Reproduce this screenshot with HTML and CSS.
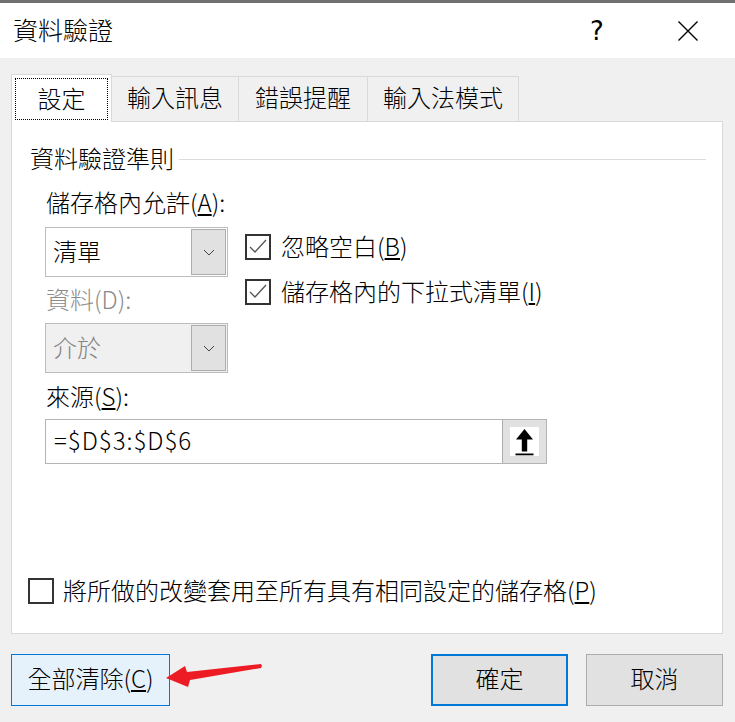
FILE: index.html
```html
<!DOCTYPE html>
<html lang="zh-Hant">

<head>
  <meta charset="UTF-8">
  <meta name="viewport" content="width=device-width, initial-scale=1.0">
  <title>資料驗證</title>
  <link rel="stylesheet" href="styles.css">
</head>

<body>
  <div id="topline"></div>
  <div id="titlebar">
    <span id="title">資料驗證</span>
    <span id="help">?</span>
    <svg id="close" width="22" height="22" viewBox="0 0 22 22">
      <path d="M1.5 1.5L20.5 20.5M20.5 1.5L1.5 20.5" stroke="#000" stroke-width="1.4" fill="none" />
    </svg>
  </div>

  <div id="content">
    <ul id="tabs">
      <li class="tab active"><span class="focus">設定</span></li>
      <li class="tab t1">輸入訊息</li>
      <li class="tab t2">錯誤提醒</li>
      <li class="tab t3">輸入法模式</li>
    </ul>

    <div id="panel">
      <div class="group">
        <span>資料驗證準則</span>
        <i class="rule"></i>
      </div>

      <div class="criteria">
        <div class="left">
          <p class="label">儲存格內允許(<u>A</u>):</p>
          <div class="combo">
            <span class="value">清單</span>
            <b class="drop">
              <svg width="12" height="7" viewBox="0 0 12 7"><path d="M1 1L6 6L11 1" stroke="#444" stroke-width="1" fill="none" /></svg>
            </b>
          </div>
          <p class="label off">資料(D):</p>
          <div class="combo off">
            <span class="value">介於</span>
            <b class="drop">
              <svg width="12" height="7" viewBox="0 0 12 7"><path d="M1 1L6 6L11 1" stroke="#444" stroke-width="1" fill="none" /></svg>
            </b>
          </div>
        </div>
        <div class="right">
          <div class="check">
            <span class="box"><svg width="22" height="22" viewBox="0 0 22 22"><path d="M3 11L8 16L19 4" stroke="#555" stroke-width="1.3" fill="none" /></svg></span>
            <span>忽略空白(<u>B</u>)</span>
          </div>
          <div class="check second">
            <span class="box"><svg width="22" height="22" viewBox="0 0 22 22"><path d="M3 11L8 16L19 4" stroke="#555" stroke-width="1.3" fill="none" /></svg></span>
            <span>儲存格內的下拉式清單(<u>I</u>)</span>
          </div>
        </div>
      </div>

      <p class="label source-label">來源(<u>S</u>):</p>
      <div class="source">
        <span class="value">=$D$3:$D$6</span>
        <b class="pick">
          <span class="pick-inner">
            <svg width="29" height="29" viewBox="0 0 29 29">
              <path d="M14.5 2L23 12.5H17.2V24.5H11.8V12.5H6Z" fill="#000" />
              <rect x="5.5" y="26.5" width="18" height="1.8" fill="#000" />
            </svg>
          </span>
        </b>
      </div>

      <div class="check apply">
        <span class="box"></span>
        <span>將所做的改變套用至所有具有相同設定的儲存格(<u>P</u>)</span>
      </div>
    </div>

    <div id="buttons">
      <button class="btn clear">全部清除(<u>C</u>)</button>
      <span class="grow"></span>
      <button class="btn ok">確定</button>
      <button class="btn cancel">取消</button>
    </div>
  </div>

  <!-- red pointer drawn over the dialog -->
  <svg id="pointer" width="110" height="40" viewBox="0 0 110 40">
    <path d="M6 23L25 11L27 17L101 9L102 11L101 13L30 25L28 32Z" fill="#ed1c24" />
  </svg>
</body>

</html>
```

FILE: styles.css
```css
* {
  margin: 0;
  padding: 0;
  box-sizing: border-box;
}

body {
  width: 735px;
  height: 722px;
  overflow: hidden;
  position: relative;
  background: #f0f0f0;
  color: #000;
  font-family: "Noto Sans CJK TC", sans-serif;
  font-size: 24px;
  font-weight: 300;
}

#topline {
  height: 3px;
  background: #707070;
}

#titlebar {
  height: 55px;
  background: #fff;
  display: flex;
  align-items: center;
  padding-left: 13px;
}

#title {
  flex: 1;
  font-size: 25px;
  line-height: 30px;
  margin-bottom: 3px;
}

#help {
  width: 30px;
  text-align: center;
  font-family: "DejaVu Sans", sans-serif;
  font-weight: normal;
  font-size: 26px;
  line-height: 30px;
}

#close {
  margin-left: 65px;
  margin-right: 36px;
}

#content {
  padding: 0 12px 0 11px;
}

#tabs {
  list-style: none;
  display: flex;
  align-items: flex-end;
  height: 64px;
  margin-bottom: -1px;
  position: relative;
  z-index: 1;
}

.tab {
  height: 46px;
  line-height: 40px;
  text-align: center;
  border: 1px solid #d9d9d9;
  border-left: none;
  background: #f0f0f0;
}

.tab.active {
  width: 101px;
  height: 48px;
  padding: 3px 3px 2px;
  border-left: 1px solid #d9d9d9;
  border-bottom: none;
  background: #fff;
}

.focus {
  display: block;
  height: 42px;
  line-height: 37px;
  border: 1px dotted #000;
}

.t1 {
  width: 127px;
}

.t2 {
  width: 129px;
}

.t3 {
  width: 151px;
}

#panel {
  height: 513px;
  background: #fff;
  border: 1px solid #d9d9d9;
  padding-top: 21px;
}

.group {
  display: flex;
  align-items: center;
  height: 30px;
  line-height: 28px;
  padding-left: 18px;
}

.rule {
  flex: 1;
  height: 1px;
  margin: 2px 16px 0 5px;
  background: #dcdcdc;
}

.criteria {
  display: flex;
  margin-top: 15px;
  padding-left: 33px;
}

.left {
  width: 183px;
}

.label {
  line-height: 28px;
  margin-left: 1px;
}

.label.off {
  margin-top: 8px;
  color: #8b8b8b;
}

.combo {
  display: flex;
  align-items: stretch;
  height: 50px;
  margin-top: 11px;
  padding: 1px;
  border: 1px solid #bdbdbd;
  background: #fff;
}

.combo.off {
  margin-top: 10px;
  background: #f0f0f0;
  color: #838383;
}

.combo .value {
  flex: 1;
  line-height: 44px;
  padding-left: 6px;
}

.drop {
  width: 35px;
  display: flex;
  align-items: center;
  justify-content: center;
  border: 1px solid #adadad;
  background: #e1e1e1;
}

.right {
  margin-left: 17px;
  padding-top: 46px;
}

.check {
  display: flex;
  align-items: center;
  height: 26px;
  line-height: 28px;
  gap: 10px;
}

.check > span:last-child {
  margin-bottom: 2px;
}

.check.second {
  margin-top: 19px;
}

.box {
  width: 26px;
  height: 26px;
  border: 2px solid #333;
  background: #fff;
  flex: none;
}

.box svg {
  display: block;
}

.source-label {
  margin: 9px 0 0 34px;
}

.source {
  display: flex;
  width: 502px;
  height: 45px;
  margin: 9px 0 0 33px;
  border: 1px solid #b4b4b4;
}

.source .value {
  flex: 1;
  line-height: 40px;
  padding-left: 8px;
  letter-spacing: 1px;
}

.pick {
  width: 44px;
  display: flex;
  align-items: center;
  justify-content: center;
  border-left: 1px solid #adadad;
  background: #e1e1e1;
}

.pick-inner {
  width: 29px;
  height: 29px;
  background: #fff;
}

.pick-inner svg {
  display: block;
}

.check.apply {
  margin: 114px 0 0 16px;
  gap: 9px;
}

#buttons {
  display: flex;
  height: 52px;
  margin-top: 20px;
}

.grow {
  flex: 1;
}

.btn {
  height: 52px;
  padding-bottom: 5px;
  font-family: inherit;
  font-size: 24px;
  font-weight: 300;
  color: #000;
  border: 1px solid #adadad;
  background: #e1e1e1;
}

.btn.clear {
  width: 159px;
  background: #e5f1fb;
  border-color: #0078d7;
}

.btn.ok {
  width: 137px;
  border: 2px solid #0078d7;
}

.btn.cancel {
  width: 137px;
  margin-left: 18px;
}

#pointer {
  position: absolute;
  left: 160px;
  top: 655px;
}
```
